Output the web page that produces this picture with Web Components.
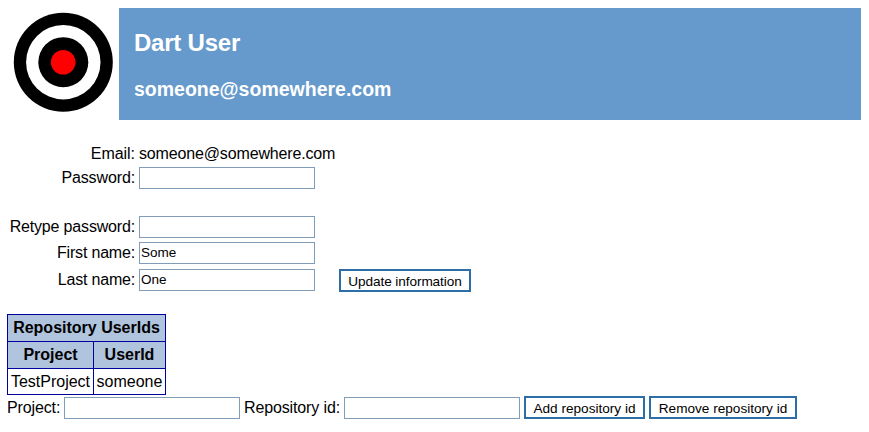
<!DOCTYPE html>
<html lang="en">
<head>
<meta charset="utf-8">
<title>Dart User</title>
<style>
body { margin: 0; background: #fff; color: #000; font: 16px/18px "Liberation Sans", Arial, sans-serif; }
</style>
</head>
<body>
<dart-user-page></dart-user-page>
<script>
const define = (name, html, setup) => {
  const template = document.createElement('template');
  template.innerHTML = html;
  customElements.define(name, class extends HTMLElement {
    constructor() {
      super();
      this.attachShadow({ mode: 'open' }).append(template.content.cloneNode(true));
    }
    connectedCallback() { if (setup) setup(this, this.shadowRoot); }
  });
};

define('dart-logo', `
<style>:host { display: block; width: 112px; height: 112px; } svg { display: block; }</style>
<svg width="112" height="112" viewBox="0 0 112 112">
  <circle cx="55.3" cy="54.2" r="49.5" fill="#000"/>
  <circle cx="55.3" cy="54.2" r="37.2" fill="#fff"/>
  <circle cx="55.3" cy="54.2" r="25" fill="#000"/>
  <circle cx="55.2" cy="54.2" r="12.3" fill="#f00"/>
</svg>`);

define('page-banner', `
<style>
:host { display: flex; height: 112px; }
.bar { flex: 1; margin-left: -1px; background: #6699cc; color: #fff; padding: 21px 15px 0; box-sizing: border-box; }
h2, h3 { margin: 0; font-weight: bold; white-space: nowrap; }
h2 { font-size: 24px; line-height: 28px; letter-spacing: -.22px; }
h3 { font-size: 19.5px; line-height: 22px; margin-top: 21px; }
</style>
<dart-logo></dart-logo>
<div class="bar"><h2><slot name="title"></slot></h2><h3><slot name="subtitle"></slot></h3></div>`);

define('text-field', `
<style>
:host { display: block; width: 176px; height: 22px; flex: none; }
input { display: block; width: 100%; height: 100%; box-sizing: border-box; margin: 0; padding: 0 1px 1px;
  border: 1px solid #7f9db9; border-radius: 0; background: #fff; color: #000; outline: 0;
  font: 13.5px/18px "Liberation Sans", Arial, sans-serif; }
</style>
<input>`, (host, root) => {
  const input = root.querySelector('input');
  input.type = host.getAttribute('type') || 'text';
  input.value = host.getAttribute('value') || '';
});

define('push-button', `
<style>
:host { display: block; width: var(--w); height: 23px; flex: none; }
button { display: block; width: 100%; height: 100%; box-sizing: border-box; margin: 0; padding: 2px 0 0;
  border: 2px solid #2d6ea8; border-radius: 0; background: #fff; color: #000; white-space: nowrap;
  font: 13.6px/17px "Liberation Sans", Arial, sans-serif; letter-spacing: var(--ls, 0); }
</style>
<button type="button"><slot></slot></button>`);

define('form-row', `
<style>
:host { display: flex; align-items: flex-start; height: var(--h); }
.label { width: 127px; flex: none; margin-right: 4px; text-align: right; padding-top: var(--pt, 2px); letter-spacing: var(--label-ls, 0); white-space: nowrap; }
</style>
<div class="label"><slot name="label"></slot></div><slot></slot>`);

define('repository-table', `
<style>
:host { display: block; }
table { border-collapse: collapse; table-layout: fixed; width: 159px; }
th, td { border: 1px solid #00009c; padding: 0; text-align: center; height: 26px; line-height: 26px; white-space: nowrap; }
th { background: #b0c4de; font-weight: bold; }
td { height: 25px; line-height: 25px; }
</style>
<table>
  <colgroup><col style="width:86px"><col style="width:72px"></colgroup>
  <tr><th colspan="2">Repository UserIds</th></tr>
  <tr><th>Project</th><th>UserId</th></tr>
  <tr><td>TestProject</td><td>someone</td></tr>
</table>`);

define('repository-form', `
<style>
:host { display: flex; height: 23px; align-items: flex-start; }
span { padding-top: 3px; white-space: nowrap; flex: none; letter-spacing: -.13px; }
text-field { margin: 1px 4px 0 0; }
push-button + push-button { margin-left: 4px; }
</style>
<span style="width:57px">Project:</span><text-field></text-field>
<span style="width:100px">Repository id:</span><text-field></text-field>
<push-button style="--w:121px">Add repository id</push-button>
<push-button style="--w:148px">Remove repository id</push-button>`);

define('dart-user-page', `
<style>
:host { display: block; box-sizing: border-box; width: 869px; height: 432px; padding: 8px 8px 0; overflow: hidden; }
.form { padding-top: 24px; }
.value { padding-top: 1px; letter-spacing: -.15px; }
push-button { margin-left: 24px; }
repository-table { margin: 22px 0 0 -1px; }
repository-form { margin: 1px 0 0 -1px; }
</style>
<page-banner><span slot="title">Dart User</span><span slot="subtitle">someone@somewhere.com</span></page-banner>
<div class="form">
  <form-row style="--h:23px;--pt:1px;--label-ls:-.05px"><span slot="label">Email:</span><span class="value">someone@somewhere.com</span></form-row>
  <form-row style="--h:49px;--label-ls:-.12px"><span slot="label">Password:</span><text-field type="password"></text-field></form-row>
  <form-row style="--h:26px;--label-ls:-.17px"><span slot="label">Retype password:</span><text-field type="password"></text-field></form-row>
  <form-row style="--h:27px;--label-ls:-.18px"><span slot="label">First name:</span><text-field value="Some"></text-field></form-row>
  <form-row style="--h:23px;--label-ls:-.2px"><span slot="label">Last name:</span><text-field value="One"></text-field><push-button style="--w:132px;--ls:-.08px">Update information</push-button></form-row>
</div>
<repository-table></repository-table>
<repository-form></repository-form>`);
</script>
</body>
</html>
